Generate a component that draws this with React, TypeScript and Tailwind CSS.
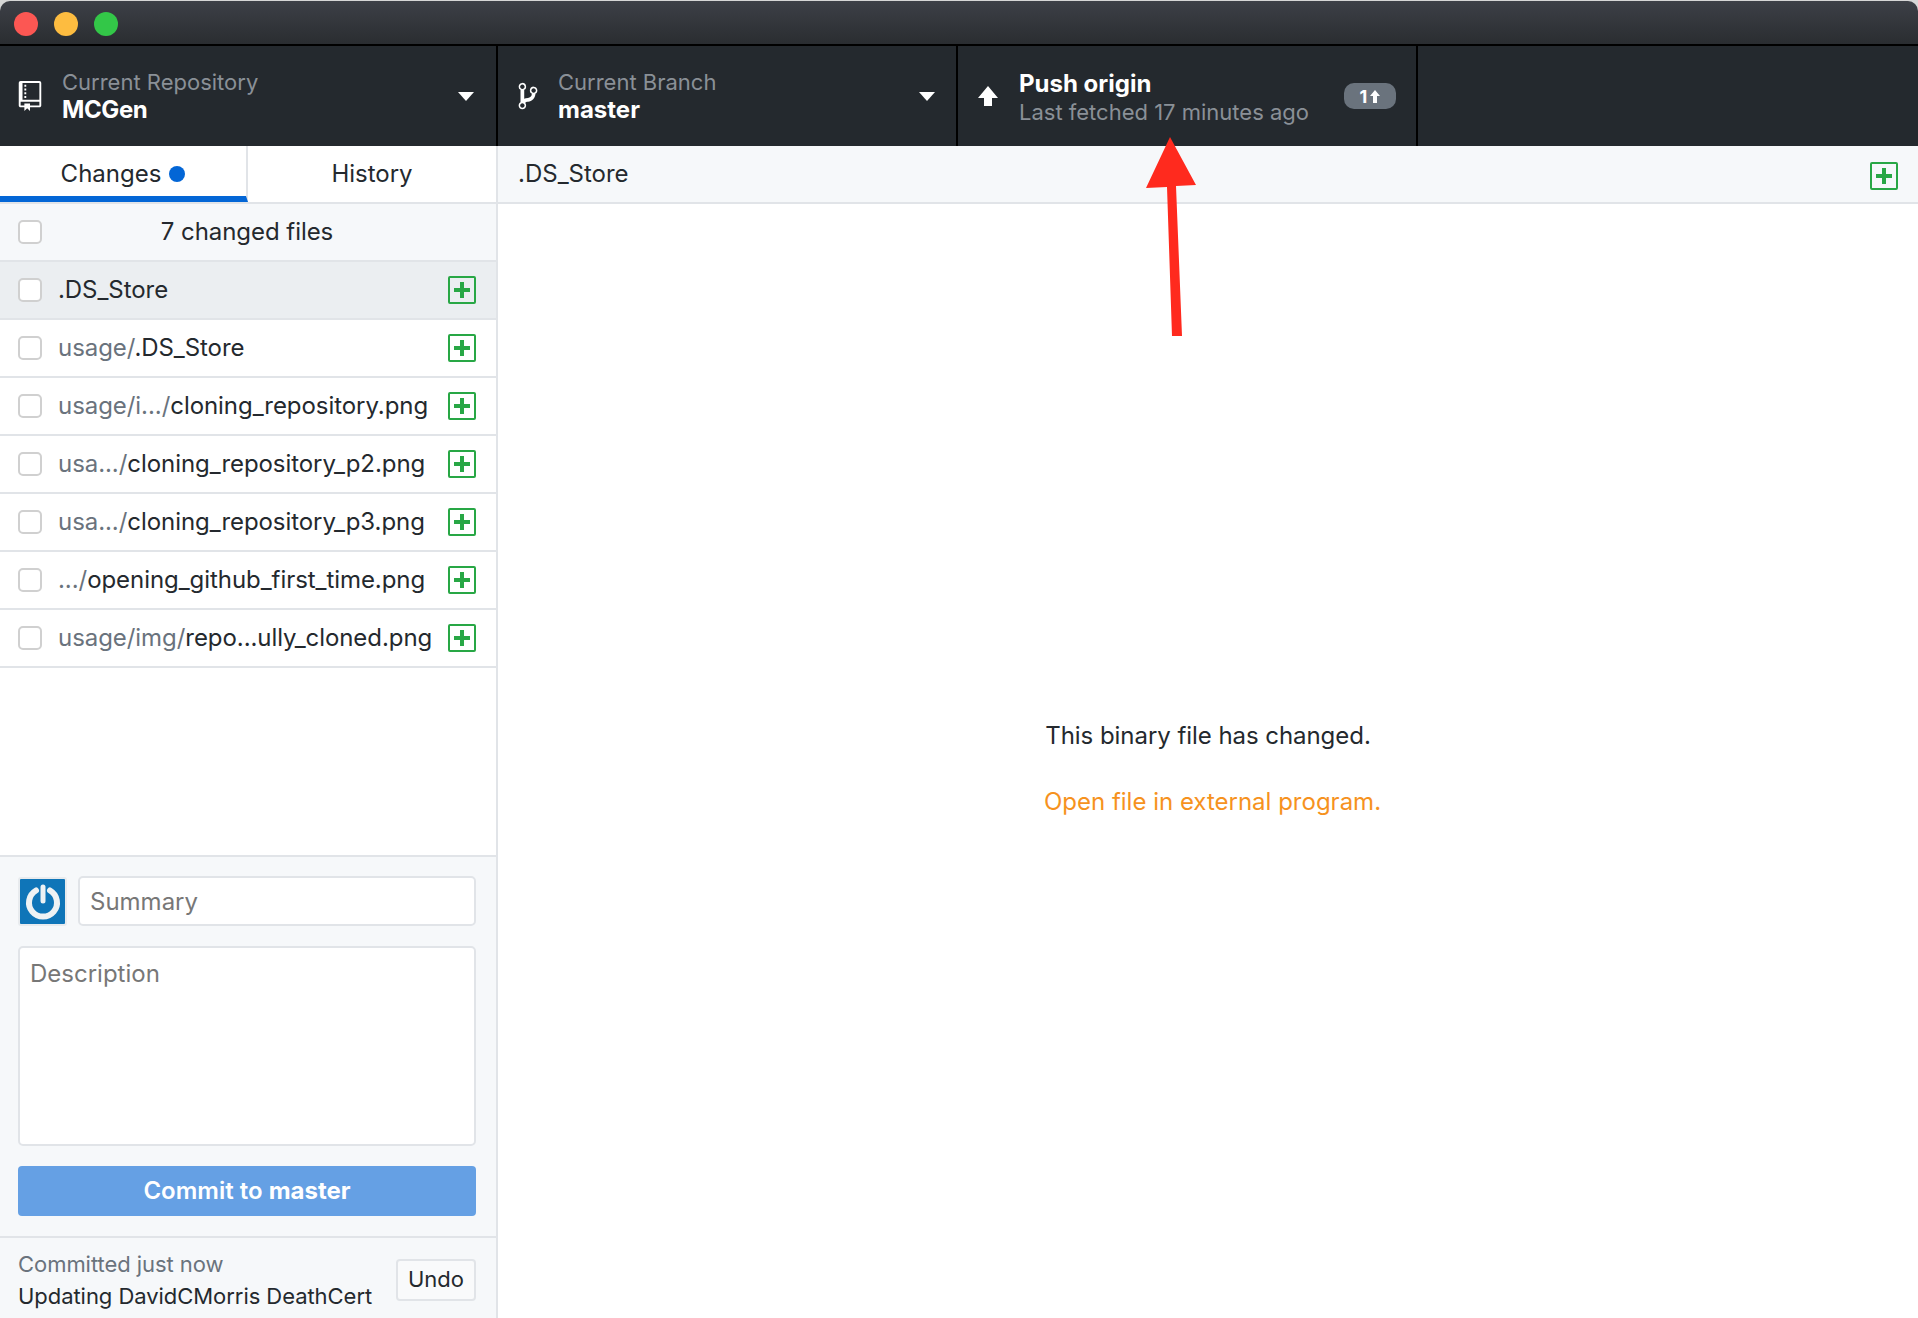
const files = [
  { dir: '', name: '.DS_Store', selected: true },
  { dir: 'usage/', name: '.DS_Store' },
  { dir: 'usage/i.../', name: 'cloning_repository.png' },
  { dir: 'usa.../', name: 'cloning_repository_p2.png' },
  { dir: 'usa.../', name: 'cloning_repository_p3.png' },
  { dir: '.../', name: 'opening_github_first_time.png' },
  { dir: 'usage/img/', name: 'repo...ully_cloned.png' },
];

function Caret({ className }: { className: string }) {
  return (
    <svg viewBox="0 0 16 9" className={className}>
      <path d="M0 0h16L8 9z" fill="#fff" />
    </svg>
  );
}

function AddedIcon() {
  return (
    <div className="flex h-[28px] w-[28px] shrink-0 items-center justify-center rounded-[2px] border-2 border-[#28a745]">
      <svg viewBox="0 0 16 16" className="h-[16px] w-[16px]">
        <path d="M6 0h4v6h6v4h-6v6H6v-6H0V6h6z" fill="#28a745" />
      </svg>
    </div>
  );
}

function Checkbox() {
  return (
    <input
      type="checkbox"
      className="h-[24px] w-[24px] shrink-0 appearance-none rounded-[5px] border-2 border-[#d0d0d0] bg-white"
    />
  );
}

export default function App() {
  return (
    <div className="relative flex h-[1318px] w-[1918px] flex-col overflow-hidden bg-[#d6d6d6] pt-[1px] font-['Inter',sans-serif] text-[24px] text-[#24292e]">
      {/* Title bar */}
      <div className="flex h-[45px] shrink-0 items-center gap-[16px] rounded-t-[10px] border-b-2 border-black bg-gradient-to-b from-[#3d4047] to-[#2a2d31] pl-[14px] pt-[3px]">
        <div className="h-[24px] w-[24px] rounded-full bg-[#fc5753]" />
        <div className="h-[24px] w-[24px] rounded-full bg-[#fdbc40]" />
        <div className="h-[24px] w-[24px] rounded-full bg-[#33c748]" />
      </div>

      {/* Toolbar */}
      <div className="flex h-[100px] shrink-0 bg-[#24292e] text-white">
        <div className="flex w-[498px] items-center border-r-2 border-black pl-[18px] pr-[22px]">
          <svg viewBox="0 0 12 16" className="h-[30px] w-[24px] shrink-0" fill="#fff">
            <path d="M4 9H3V8h1v1zm0-3H3v1h1V6zm0-2H3v1h1V4zm0-2H3v1h1V2zm8-1v12c0 .55-.45 1-1 1H6v2l-1.5-1.5L3 16v-2H1c-.55 0-1-.45-1-1V1c0-.55.45-1 1-1h10c.55 0 1 .45 1 1zm-1 10H1v2h2v-1h3v1h5v-2zm0-10H2v9h9V1z" />
          </svg>
          <div className="ml-[20px] min-w-0 flex-1 leading-[28px]">
            <div className="text-[22px] text-[#8a9097]">Current Repository</div>
            <div className="text-[24px] font-bold tracking-[-0.4px]">MCGen</div>
          </div>
          <Caret className="h-[9px] w-[16px]" />
        </div>

        <div className="flex w-[460px] items-center border-r-2 border-black pl-[20px] pr-[21px]">
          <svg viewBox="0 0 10 16" className="h-[30px] w-[20px] shrink-0" fill="#fff">
            <path d="M10 5c0-1.11-.89-2-2-2a1.993 1.993 0 0 0-1 3.72v.3c-.02.52-.23.98-.63 1.38-.4.4-.86.61-1.38.63-.83.02-1.48.16-2 .45V4.72a1.993 1.993 0 0 0-1-3.72C.88 1 0 1.89 0 3a2 2 0 0 0 1 1.72v6.56c-.59.35-1 .99-1 1.72 0 1.11.89 2 2 2 1.11 0 2-.89 2-2 0-.53-.2-1-.53-1.36.09-.06.48-.41.59-.47.25-.11.56-.17.94-.17 1.05-.05 1.95-.45 2.75-1.25S8.95 7.77 9 6.73h-.02C9.59 6.37 10 5.73 10 5zM2 1.8c.66 0 1.2.55 1.2 1.2 0 .65-.55 1.2-1.2 1.2C1.35 4.2.8 3.65.8 3c0-.65.55-1.2 1.2-1.2zm0 12.41c-.66 0-1.2-.55-1.2-1.2 0-.65.55-1.2 1.2-1.2.65 0 1.2.55 1.2 1.2 0 .65-.55 1.2-1.2 1.2zm6-8c-.66 0-1.2-.55-1.2-1.2 0-.65.55-1.2 1.2-1.2.65 0 1.2.55 1.2 1.2 0 .65-.55 1.2-1.2 1.2z" />
          </svg>
          <div className="ml-[20px] min-w-0 flex-1 leading-[28px]">
            <div className="text-[22px] text-[#8a9097]">Current Branch</div>
            <div className="text-[24px] font-bold">master</div>
          </div>
          <Caret className="h-[9px] w-[16px]" />
        </div>

        <div className="flex w-[460px] items-center border-r-2 border-black pl-[20px] pr-[20px]">
          <svg viewBox="0 0 10 10" className="h-[20px] w-[20px] shrink-0" fill="#fff">
            <path d="M5 0L0 6h3v4h4V6h3z" />
          </svg>
          <div className="ml-[21px] min-w-0 flex-1 pt-[3px] leading-[28px]">
            <div className="text-[24px] font-bold">Push origin</div>
            <div className="text-[22px] text-[#8a9097]">Last fetched 17 minutes ago</div>
          </div>
          <div className="flex h-[26px] w-[52px] items-center justify-center gap-[3px] rounded-[10px] bg-[#6a737d] text-[18px] font-bold">
            1
            <svg viewBox="0 0 10 13" className="h-[13px] w-[10px]" fill="#fff">
              <path d="M5 0L0 6h3v7h4V6h3z" />
            </svg>
          </div>
        </div>
      </div>

      <div className="flex min-h-0 flex-1 bg-white">
        {/* Sidebar */}
        <div className="flex w-[498px] shrink-0 flex-col border-r-2 border-[#e1e4e8] bg-white">
          <div className="flex h-[58px] shrink-0 border-b-2 border-[#e1e4e8]">
            <div className="flex w-[248px] items-center justify-center gap-[8px] border-r-2 border-[#e1e4e8] border-b-[6px] border-b-[#0366d6] pt-[6px]">
              Changes
              <div className="h-[16px] w-[16px] rounded-full bg-[#0366d6]" />
            </div>
            <div className="flex flex-1 items-center justify-center">History</div>
          </div>

          <div className="flex h-[58px] shrink-0 items-center border-b-2 border-[#e1e4e8] bg-[#f6f8fa] pl-[18px]">
            <Checkbox />
            <div className="flex-1 pr-[44px] text-center tracking-[-0.05px]">7 changed files</div>
          </div>

          {files.map((f, i) => (
            <div
              key={i}
              className={
                f.selected
                  ? 'flex h-[58px] shrink-0 items-center border-b-2 border-[#e1e4e8] bg-[#ebeef1] pl-[18px] pr-[20px]'
                  : 'flex h-[58px] shrink-0 items-center border-b-2 border-[#e1e4e8] pl-[18px] pr-[20px]'
              }
            >
              <Checkbox />
              <div className="ml-[16px] min-w-0 flex-1 whitespace-nowrap tracking-[-0.06px]">
                <span className="text-[#6a737d]">{f.dir}</span>
                {f.name}
              </div>
              <AddedIcon />
            </div>
          ))}

          <div className="min-h-0 flex-1" />

          {/* Commit form */}
          <div className="flex h-[381px] shrink-0 flex-col border-t-2 border-[#e1e4e8] bg-[#f6f8fa] pl-[18px] pr-[20px] pt-[19px]">
            <div className="flex h-[50px] shrink-0 items-center gap-[11px]">
              <div className="flex h-[49px] w-[49px] shrink-0 items-center justify-center rounded-[3px] border-2 border-[#e8ebee] bg-[#0f75b8]">
                <svg viewBox="0 0 40 40" className="h-[40px] w-[40px]" fill="none" stroke="#eef2f4" strokeLinecap="round">
                  <path d="M13 9.5a14 14 0 1 0 14 0" strokeWidth="6" />
                  <path d="M20 6v14" strokeWidth="5" />
                </svg>
              </div>
              <input
                placeholder="Summary"
                className="h-[50px] min-w-0 flex-1 rounded-[5px] border-2 border-[#e1e4e8] bg-white px-[10px] outline-none placeholder:text-[#777]"
              />
            </div>
            <textarea
              placeholder="Description"
              className="mt-[20px] h-[200px] w-full shrink-0 resize-none rounded-[5px] border-2 border-[#e1e4e8] bg-white px-[10px] py-[8px] outline-none placeholder:text-[#777]"
            />
            <button className="mt-[20px] h-[50px] w-full shrink-0 rounded-[4px] bg-[#65a0e4] font-semibold text-white">
              Commit to <span className="font-bold">master</span>
            </button>
          </div>

          <div className="flex h-[82px] shrink-0 items-center justify-between border-t-2 border-[#e1e4e8] bg-[#f6f8fa] pl-[18px] pr-[20px] pt-[3px]">
            <div className="whitespace-nowrap text-[22px] leading-[32px] tracking-[-0.05px]">
              <div className="text-[#6a737d]">Committed just now</div>
              <div>Updating DavidCMorris DeathCert</div>
            </div>
            <button className="h-[42px] w-[80px] rounded-[4px] border-2 border-[#e1e4e8] bg-[#f9fafb] text-[22px]">Undo</button>
          </div>
        </div>

        {/* Diff pane */}
        <div className="flex min-w-0 flex-1 flex-col">
          <div className="flex h-[58px] shrink-0 items-center justify-between border-b-2 border-[#e1e4e8] bg-[#f6f8fa] pl-[20px] pr-[20px]">
            .DS_Store
            <div className="mt-[4px]">
              <AddedIcon />
            </div>
          </div>
          <div className="flex flex-1 flex-col items-center justify-center gap-[30px] pt-[16px]">
            <div className="tracking-[-0.05px]">This binary file has changed.</div>
            <div className="pl-[9px] text-[#f6921e]">Open file in external program.</div>
          </div>
        </div>
      </div>

      {/* Red annotation arrow */}
      <svg className="absolute left-[1140px] top-[130px] h-[210px] w-[64px]" viewBox="1140 130 64 210">
        <path d="M1170 137L1196 185L1176 186L1182 336L1172 336L1167 187L1146 188Z" fill="#ff2a1e" />
      </svg>
    </div>
  );
}
